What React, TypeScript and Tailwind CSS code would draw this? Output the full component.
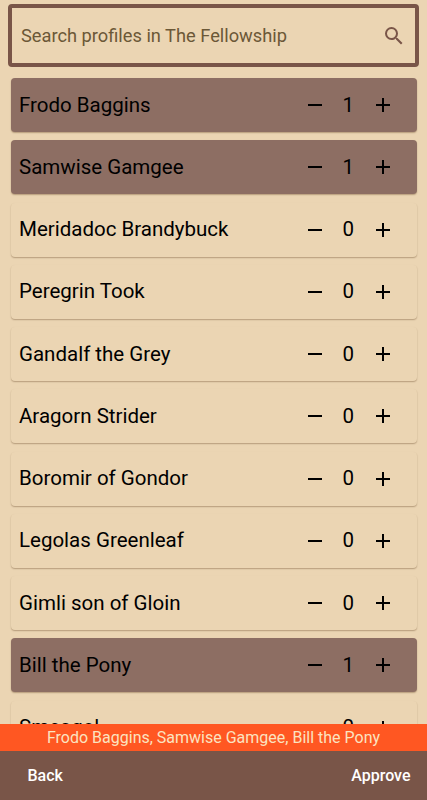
import { useState, type FC } from "react";
import { MdAdd, MdRemove, MdSearch } from "react-icons/md";

type Profile = {
  name: string;
  count: number;
};

const initialProfiles: Profile[] = [
  { name: "Frodo Baggins", count: 1 },
  { name: "Samwise Gamgee", count: 1 },
  { name: "Meridadoc Brandybuck", count: 0 },
  { name: "Peregrin Took", count: 0 },
  { name: "Gandalf the Grey", count: 0 },
  { name: "Aragorn Strider", count: 0 },
  { name: "Boromir of Gondor", count: 0 },
  { name: "Legolas Greenleaf", count: 0 },
  { name: "Gimli son of Gloin", count: 0 },
  { name: "Bill the Pony", count: 1 },
  { name: "Smeagol", count: 0 },
];

type ProfileCardProps = {
  profile: Profile;
  onChange: (count: number) => void;
};

const ProfileCard: FC<ProfileCardProps> = ({ profile, onChange }) => {
  return (
    <li
      className={`flex h-[54px] shrink-0 items-center rounded-[4px] pl-[8.5px] pr-[21.5px] text-[20.5px] text-black shadow-[0_1px_1px_rgba(80,50,20,0.22),0_1px_2px_rgba(80,50,20,0.14)] ${
        profile.count > 0 ? "bg-[#8d6e63]" : "bg-[#ebd5b3]"
      }`}
    >
      <span className="flex-1 whitespace-nowrap">{profile.name}</span>
      <button
        aria-label={`Remove ${profile.name}`}
        onClick={() => onChange(Math.max(0, profile.count - 1))}
      >
        <MdRemove className="size-6" />
      </button>
      <span className="w-[44.5px] pr-px text-center">{profile.count}</span>
      <button
        aria-label={`Add ${profile.name}`}
        onClick={() => onChange(profile.count + 1)}
      >
        <MdAdd className="size-6" />
      </button>
    </li>
  );
};

export default function App() {
  const [profiles, setProfiles] = useState(initialProfiles);
  const [search, setSearch] = useState("");

  const selected = profiles.filter((p) => p.count > 0).map((p) => p.name);

  const setCount = (name: string, count: number) =>
    setProfiles(profiles.map((p) => (p.name === name ? { ...p, count } : p)));

  return (
    <div className="flex h-screen flex-col overflow-hidden bg-[#ebd5b3] font-[Roboto,sans-serif]">
      <main className="flex min-h-0 flex-1 flex-col overflow-hidden pt-1">
        <label className="mx-[8px] flex h-[63px] shrink-0 items-center rounded-[4px] border-4 border-[#795548] pl-[9px] pr-[9px]">
          <input
            className="min-w-0 flex-1 bg-transparent text-[18.25px] text-black outline-none placeholder:text-[#6b5837]"
            placeholder="Search profiles in The Fellowship"
            value={search}
            onChange={(e) => setSearch(e.target.value)}
          />
          <MdSearch className="size-6 text-[#795548]" />
        </label>
        <ul className="mx-[10.5px] mt-[11px] flex flex-col gap-[8.25px]">
          {profiles
            .filter((p) => p.name.toLowerCase().includes(search.toLowerCase()))
            .map((p) => (
              <ProfileCard
                key={p.name}
                profile={p}
                onChange={(count) => setCount(p.name, count)}
              />
            ))}
        </ul>
      </main>
      <div className="h-[27px] shrink-0 truncate bg-[#ff5722] text-center text-[16px] leading-[27px] text-[#fbe3c0]">
        {selected.join(", ")}
      </div>
      <footer className="flex h-[49px] shrink-0 items-center justify-between bg-[#795548] pl-[27.5px] pr-[16.5px] text-[16px] font-medium text-white">
        <button>Back</button>
        <button>Approve</button>
      </footer>
    </div>
  );
}
